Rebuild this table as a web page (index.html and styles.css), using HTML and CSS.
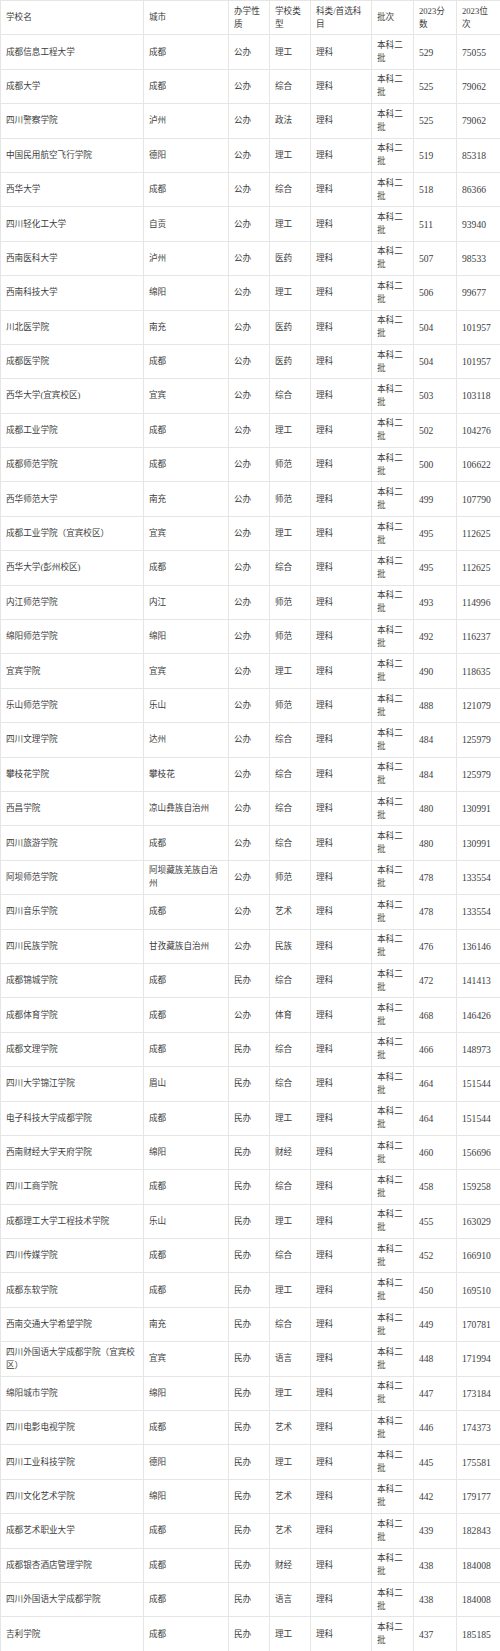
FILE: index.html
```html
<!DOCTYPE html>
<html lang="zh">
<head>
<meta charset="utf-8">
<title>四川本科二批理科院校</title>
<link rel="stylesheet" href="styles.css">
</head>
<body>
<table class="grid">
<colgroup>
<col class="c-name"><col class="c-city"><col class="c-own"><col class="c-type"><col class="c-subj"><col class="c-batch"><col class="c-score"><col class="c-rank">
</colgroup>
<thead>
<tr><th>学校名</th><th>城市</th><th>办学性质</th><th>学校类型</th><th>科类/首选科目</th><th>批次</th><th>2023分数</th><th>2023位次</th></tr>
</thead>
<tbody>
<tr><td>成都信息工程大学</td><td>成都</td><td>公办</td><td>理工</td><td>理科</td><td>本科二批</td><td class="num">529</td><td class="num">75055</td></tr>
<tr><td>成都大学</td><td>成都</td><td>公办</td><td>综合</td><td>理科</td><td>本科二批</td><td class="num">525</td><td class="num">79062</td></tr>
<tr><td>四川警察学院</td><td>泸州</td><td>公办</td><td>政法</td><td>理科</td><td>本科二批</td><td class="num">525</td><td class="num">79062</td></tr>
<tr><td>中国民用航空飞行学院</td><td>德阳</td><td>公办</td><td>理工</td><td>理科</td><td>本科二批</td><td class="num">519</td><td class="num">85318</td></tr>
<tr><td>西华大学</td><td>成都</td><td>公办</td><td>综合</td><td>理科</td><td>本科二批</td><td class="num">518</td><td class="num">86366</td></tr>
<tr><td>四川轻化工大学</td><td>自贡</td><td>公办</td><td>理工</td><td>理科</td><td>本科二批</td><td class="num">511</td><td class="num">93940</td></tr>
<tr><td>西南医科大学</td><td>泸州</td><td>公办</td><td>医药</td><td>理科</td><td>本科二批</td><td class="num">507</td><td class="num">98533</td></tr>
<tr><td>西南科技大学</td><td>绵阳</td><td>公办</td><td>理工</td><td>理科</td><td>本科二批</td><td class="num">506</td><td class="num">99677</td></tr>
<tr><td>川北医学院</td><td>南充</td><td>公办</td><td>医药</td><td>理科</td><td>本科二批</td><td class="num">504</td><td class="num">101957</td></tr>
<tr><td>成都医学院</td><td>成都</td><td>公办</td><td>医药</td><td>理科</td><td>本科二批</td><td class="num">504</td><td class="num">101957</td></tr>
<tr><td>西华大学(宜宾校区)</td><td>宜宾</td><td>公办</td><td>综合</td><td>理科</td><td>本科二批</td><td class="num">503</td><td class="num">103118</td></tr>
<tr><td>成都工业学院</td><td>成都</td><td>公办</td><td>理工</td><td>理科</td><td>本科二批</td><td class="num">502</td><td class="num">104276</td></tr>
<tr><td>成都师范学院</td><td>成都</td><td>公办</td><td>师范</td><td>理科</td><td>本科二批</td><td class="num">500</td><td class="num">106622</td></tr>
<tr><td>西华师范大学</td><td>南充</td><td>公办</td><td>师范</td><td>理科</td><td>本科二批</td><td class="num">499</td><td class="num">107790</td></tr>
<tr><td>成都工业学院（宜宾校区）</td><td>宜宾</td><td>公办</td><td>理工</td><td>理科</td><td>本科二批</td><td class="num">495</td><td class="num">112625</td></tr>
<tr><td>西华大学(彭州校区)</td><td>成都</td><td>公办</td><td>综合</td><td>理科</td><td>本科二批</td><td class="num">495</td><td class="num">112625</td></tr>
<tr><td>内江师范学院</td><td>内江</td><td>公办</td><td>师范</td><td>理科</td><td>本科二批</td><td class="num">493</td><td class="num">114996</td></tr>
<tr><td>绵阳师范学院</td><td>绵阳</td><td>公办</td><td>师范</td><td>理科</td><td>本科二批</td><td class="num">492</td><td class="num">116237</td></tr>
<tr><td>宜宾学院</td><td>宜宾</td><td>公办</td><td>理工</td><td>理科</td><td>本科二批</td><td class="num">490</td><td class="num">118635</td></tr>
<tr><td>乐山师范学院</td><td>乐山</td><td>公办</td><td>师范</td><td>理科</td><td>本科二批</td><td class="num">488</td><td class="num">121079</td></tr>
<tr><td>四川文理学院</td><td>达州</td><td>公办</td><td>综合</td><td>理科</td><td>本科二批</td><td class="num">484</td><td class="num">125979</td></tr>
<tr><td>攀枝花学院</td><td>攀枝花</td><td>公办</td><td>综合</td><td>理科</td><td>本科二批</td><td class="num">484</td><td class="num">125979</td></tr>
<tr><td>西昌学院</td><td>凉山彝族自治州</td><td>公办</td><td>综合</td><td>理科</td><td>本科二批</td><td class="num">480</td><td class="num">130991</td></tr>
<tr><td>四川旅游学院</td><td>成都</td><td>公办</td><td>综合</td><td>理科</td><td>本科二批</td><td class="num">480</td><td class="num">130991</td></tr>
<tr><td>阿坝师范学院</td><td>阿坝藏族羌族自治州</td><td>公办</td><td>师范</td><td>理科</td><td>本科二批</td><td class="num">478</td><td class="num">133554</td></tr>
<tr><td>四川音乐学院</td><td>成都</td><td>公办</td><td>艺术</td><td>理科</td><td>本科二批</td><td class="num">478</td><td class="num">133554</td></tr>
<tr><td>四川民族学院</td><td>甘孜藏族自治州</td><td>公办</td><td>民族</td><td>理科</td><td>本科二批</td><td class="num">476</td><td class="num">136146</td></tr>
<tr><td>成都锦城学院</td><td>成都</td><td>民办</td><td>综合</td><td>理科</td><td>本科二批</td><td class="num">472</td><td class="num">141413</td></tr>
<tr><td>成都体育学院</td><td>成都</td><td>公办</td><td>体育</td><td>理科</td><td>本科二批</td><td class="num">468</td><td class="num">146426</td></tr>
<tr><td>成都文理学院</td><td>成都</td><td>民办</td><td>综合</td><td>理科</td><td>本科二批</td><td class="num">466</td><td class="num">148973</td></tr>
<tr><td>四川大学锦江学院</td><td>眉山</td><td>民办</td><td>综合</td><td>理科</td><td>本科二批</td><td class="num">464</td><td class="num">151544</td></tr>
<tr><td>电子科技大学成都学院</td><td>成都</td><td>民办</td><td>理工</td><td>理科</td><td>本科二批</td><td class="num">464</td><td class="num">151544</td></tr>
<tr><td>西南财经大学天府学院</td><td>绵阳</td><td>民办</td><td>财经</td><td>理科</td><td>本科二批</td><td class="num">460</td><td class="num">156696</td></tr>
<tr><td>四川工商学院</td><td>成都</td><td>民办</td><td>综合</td><td>理科</td><td>本科二批</td><td class="num">458</td><td class="num">159258</td></tr>
<tr><td>成都理工大学工程技术学院</td><td>乐山</td><td>民办</td><td>理工</td><td>理科</td><td>本科二批</td><td class="num">455</td><td class="num">163029</td></tr>
<tr><td>四川传媒学院</td><td>成都</td><td>民办</td><td>综合</td><td>理科</td><td>本科二批</td><td class="num">452</td><td class="num">166910</td></tr>
<tr><td>成都东软学院</td><td>成都</td><td>民办</td><td>理工</td><td>理科</td><td>本科二批</td><td class="num">450</td><td class="num">169510</td></tr>
<tr><td>西南交通大学希望学院</td><td>南充</td><td>民办</td><td>综合</td><td>理科</td><td>本科二批</td><td class="num">449</td><td class="num">170781</td></tr>
<tr><td>四川外国语大学成都学院（宜宾校区）</td><td>宜宾</td><td>民办</td><td>语言</td><td>理科</td><td>本科二批</td><td class="num">448</td><td class="num">171994</td></tr>
<tr><td>绵阳城市学院</td><td>绵阳</td><td>民办</td><td>理工</td><td>理科</td><td>本科二批</td><td class="num">447</td><td class="num">173184</td></tr>
<tr><td>四川电影电视学院</td><td>成都</td><td>民办</td><td>艺术</td><td>理科</td><td>本科二批</td><td class="num">446</td><td class="num">174373</td></tr>
<tr><td>四川工业科技学院</td><td>德阳</td><td>民办</td><td>理工</td><td>理科</td><td>本科二批</td><td class="num">445</td><td class="num">175581</td></tr>
<tr><td>四川文化艺术学院</td><td>绵阳</td><td>民办</td><td>艺术</td><td>理科</td><td>本科二批</td><td class="num">442</td><td class="num">179177</td></tr>
<tr><td>成都艺术职业大学</td><td>成都</td><td>民办</td><td>艺术</td><td>理科</td><td>本科二批</td><td class="num">439</td><td class="num">182843</td></tr>
<tr><td>成都银杏酒店管理学院</td><td>成都</td><td>民办</td><td>财经</td><td>理科</td><td>本科二批</td><td class="num">438</td><td class="num">184008</td></tr>
<tr><td>四川外国语大学成都学院</td><td>成都</td><td>民办</td><td>语言</td><td>理科</td><td>本科二批</td><td class="num">438</td><td class="num">184008</td></tr>
<tr><td>吉利学院</td><td>成都</td><td>民办</td><td>理工</td><td>理科</td><td>本科二批</td><td class="num">437</td><td class="num">185185</td></tr>
</tbody>
</table>
</body>
</html>
```

FILE: styles.css
```css
html, body {
  margin: 0;
  padding: 0;
  background: #ffffff;
  overflow: hidden;
}

.grid {
  width: 500px;
  table-layout: fixed;
  border-collapse: collapse;
  font-family: "Liberation Serif", "Noto Sans CJK SC", serif;
  font-size: 8.6px;
  line-height: 13px;
  color: #3d3d3d;
}

.c-name { width: 143px; }
.c-city { width: 85px; }
.c-own { width: 41px; }
.c-type { width: 41px; }
.c-subj { width: 61px; }
.c-batch { width: 42px; }
.c-score { width: 43px; }
.c-rank { width: 44px; }

.grid tr {
  height: 34.4px;
}

.grid th,
.grid td {
  border: 1px solid #e6e6e6;
  padding: 0 4px 0 5px;
  text-align: left;
  vertical-align: middle;
  font-weight: normal;
  word-break: break-all;
}

.grid .num {
  font-size: 9.6px;
}
```
